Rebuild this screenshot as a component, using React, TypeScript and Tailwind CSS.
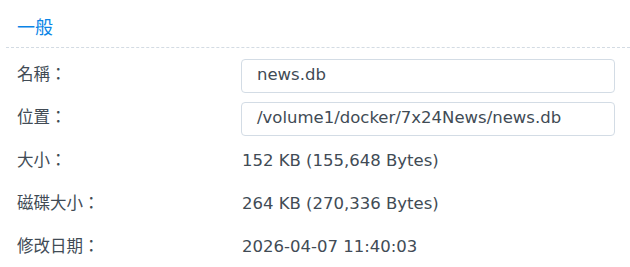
export default function App() {
  const rows = [
    { label: '名稱：', value: 'news.db', input: true },
    { label: '位置：', value: '/volume1/docker/7x24News/news.db', input: true },
    { label: '大小：', value: '152 KB (155,648 Bytes)' },
    { label: '磁碟大小：', value: '264 KB (270,336 Bytes)' },
    { label: '修改日期：', value: '2026-04-07 11:40:03' },
  ];

  return (
    <div
      className="w-[630px] h-[267px] bg-white text-[#414b55] text-[16.5px]"
      style={{ fontFamily: '"DejaVu Sans", "Noto Sans CJK TC", sans-serif' }}
    >
      <div className="ml-[6px] pt-[16px] pb-[7px] pl-[11px] border-b border-dashed border-[#d3dbe3]">
        <div className="h-[24px] leading-[24px] text-[18px] text-[#0a84e6]">一般</div>
      </div>
      <div className="pt-[6px] pl-[17px]">
        {rows.map((r, i) => (
          <div key={i} className="flex items-center h-[43px]">
            <div className="w-[224px] shrink-0">{r.label}</div>
            {r.input ? (
              <div className="w-[374px] h-[34px] flex items-center pl-[15px] border border-[#d3dce5] rounded-[4px]">
                {r.value}
              </div>
            ) : (
              <div className="pl-[1px]">{r.value}</div>
            )}
          </div>
        ))}
      </div>
    </div>
  );
}
